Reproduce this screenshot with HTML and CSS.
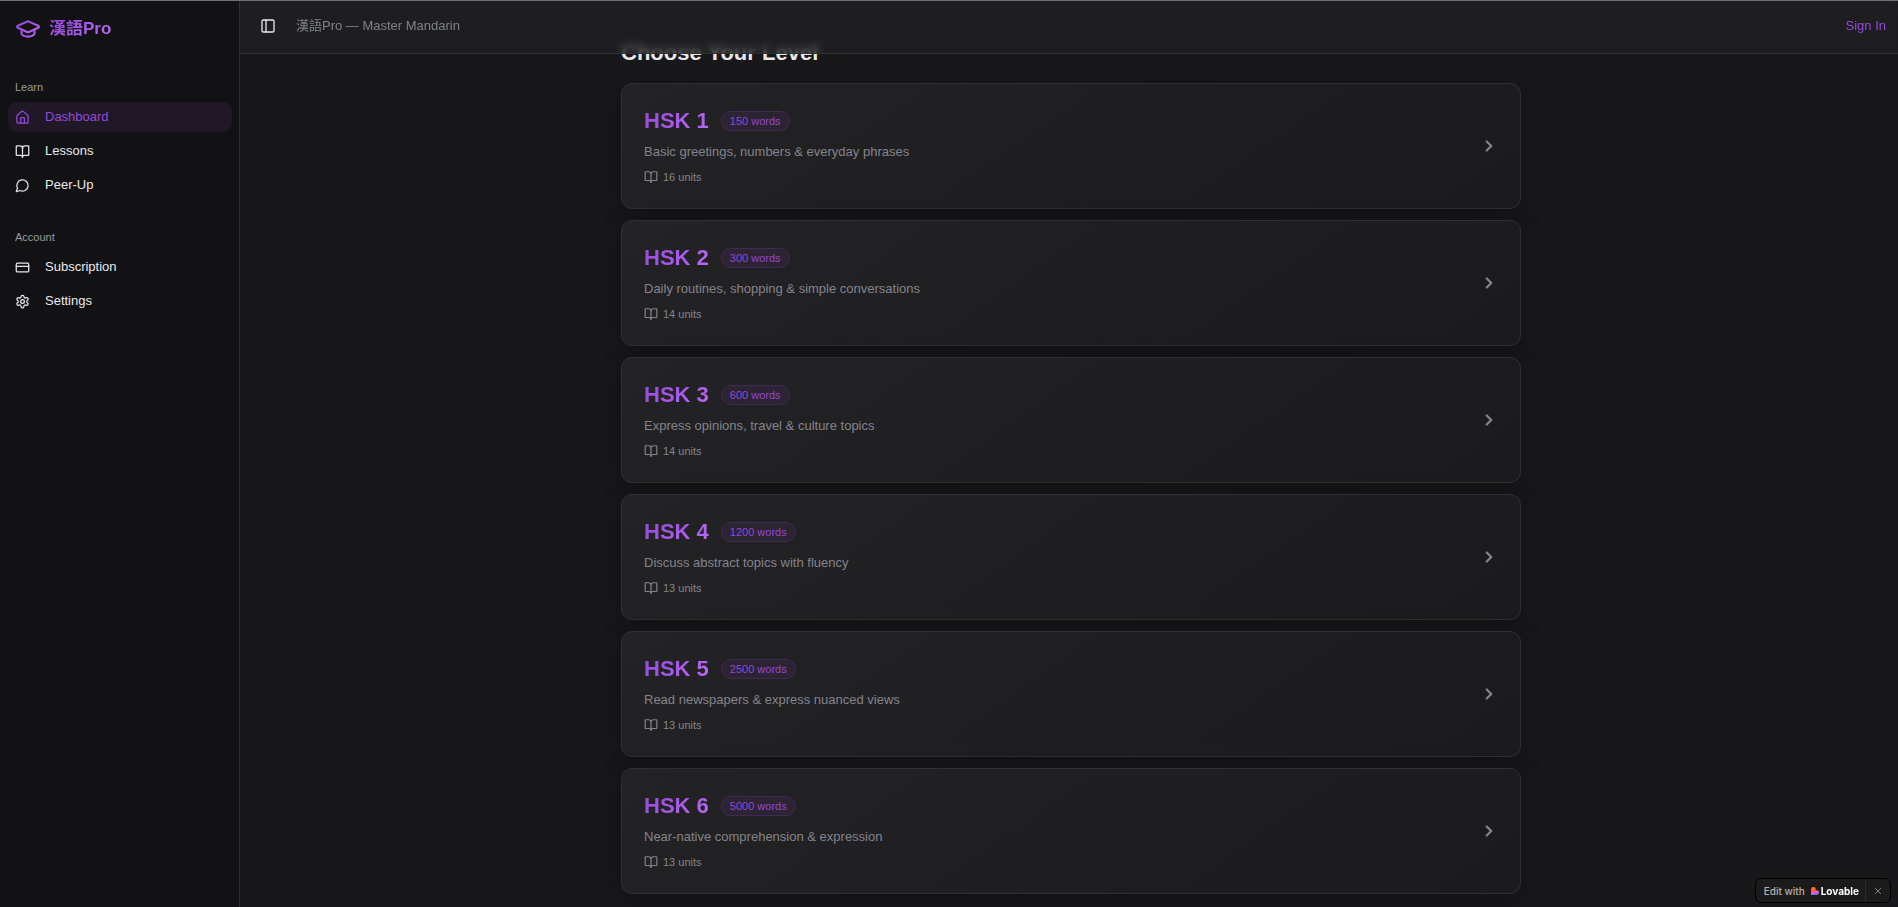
FILE: index.html
```html
<!DOCTYPE html>
<html lang="en">
<head>
  <meta charset="UTF-8">
  <meta name="viewport" content="width=device-width, initial-scale=1.0">
  <title>漢語Pro — Master Mandarin</title>
  <link rel="stylesheet" href="styles.css">
</head>
<body>
  <!-- shared icons -->
  <svg class="sprite" aria-hidden="true">
    <linearGradient id="brand" x1="0" y1="0" x2="1" y2="1">
      <stop offset="0" stop-color="#9448d8"/>
      <stop offset="1" stop-color="#b364f0"/>
    </linearGradient>
    <symbol id="book" viewBox="0 0 24 24">
      <path d="M12 7v14"/>
      <path d="M3 18a1 1 0 0 1-1-1V4a1 1 0 0 1 1-1h5a4 4 0 0 1 4 4 4 4 0 0 1 4-4h5a1 1 0 0 1 1 1v13a1 1 0 0 1-1 1h-6a3 3 0 0 0-3 3 3 3 0 0 0-3-3z"/>
    </symbol>
    <symbol id="chevron" viewBox="0 0 24 24"><path d="m9 18 6-6-6-6"/></symbol>
  </svg>

  <aside class="sidebar">
    <a class="logo" href="#">
      <svg class="icon logo-icon" viewBox="0 0 24 24">
        <path d="M21.42 10.922a1 1 0 0 0-.019-1.838L12.83 5.18a2 2 0 0 0-1.66 0L2.6 9.08a1 1 0 0 0 0 1.832l8.57 3.908a2 2 0 0 0 1.66 0z"/>
        <path d="M22 10v6"/>
        <path d="M6 12.5V16a6 3 0 0 0 12 0v-3.5"/>
      </svg>
      <span class="gradient-text">漢語Pro</span>
    </a>

    <nav class="group">
      <h2>Learn</h2>
      <a class="item active" href="#">
        <svg class="icon" viewBox="0 0 24 24">
          <path d="M15 21v-8a1 1 0 0 0-1-1h-4a1 1 0 0 0-1 1v8"/>
          <path d="M3 10a2 2 0 0 1 .709-1.528l7-5.999a2 2 0 0 1 2.582 0l7 5.999A2 2 0 0 1 21 10v9a2 2 0 0 1-2 2H5a2 2 0 0 1-2-2z"/>
        </svg>
        Dashboard
      </a>
      <a class="item" href="#">
        <svg class="icon"><use href="#book"/></svg>
        Lessons
      </a>
      <a class="item" href="#">
        <svg class="icon" viewBox="0 0 24 24"><path d="M7.9 20A9 9 0 1 0 4 16.1L2 22Z"/></svg>
        Peer-Up
      </a>
    </nav>

    <nav class="group">
      <h2>Account</h2>
      <a class="item" href="#">
        <svg class="icon" viewBox="0 0 24 24">
          <rect width="20" height="14" x="2" y="5" rx="2"/>
          <path d="M2 10h20"/>
        </svg>
        Subscription
      </a>
      <a class="item" href="#">
        <svg class="icon" viewBox="0 0 24 24">
          <path d="M12.22 2h-.44a2 2 0 0 0-2 2v.18a2 2 0 0 1-1 1.73l-.43.25a2 2 0 0 1-2 0l-.15-.08a2 2 0 0 0-2.73.73l-.22.38a2 2 0 0 0 .73 2.73l.15.1a2 2 0 0 1 1 1.72v.51a2 2 0 0 1-1 1.74l-.15.09a2 2 0 0 0-.73 2.73l.22.38a2 2 0 0 0 2.73.73l.15-.08a2 2 0 0 1 2 0l.43.25a2 2 0 0 1 1 1.73V20a2 2 0 0 0 2 2h.44a2 2 0 0 0 2-2v-.18a2 2 0 0 1 1-1.73l.43-.25a2 2 0 0 1 2 0l.15.08a2 2 0 0 0 2.73-.73l.22-.39a2 2 0 0 0-.73-2.73l-.15-.08a2 2 0 0 1-1-1.74v-.5a2 2 0 0 1 1-1.74l.15-.09a2 2 0 0 0 .73-2.73l-.22-.38a2 2 0 0 0-2.73-.73l-.15.08a2 2 0 0 1-2 0l-.43-.25a2 2 0 0 1-1-1.73V4a2 2 0 0 0-2-2z"/>
          <circle cx="12" cy="12" r="3"/>
        </svg>
        Settings
      </a>
    </nav>
  </aside>

  <div class="page">
    <header class="topbar">
      <button class="toggle" type="button" aria-label="Toggle Sidebar">
        <svg class="icon" viewBox="0 0 24 24">
          <rect width="18" height="18" x="3" y="3" rx="2"/>
          <path d="M9 3v18"/>
        </svg>
      </button>
      <span class="tagline">漢語Pro — Master Mandarin</span>
      <a class="sign-in" href="#">Sign In</a>
    </header>

    <main class="content">
      <h1>Choose Your Level</h1>
      <div class="levels">
        <a class="card" href="#">
          <div>
            <div class="card-head"><h3 class="gradient-text">HSK 1</h3><span class="badge">150 words</span></div>
            <p>Basic greetings, numbers &amp; everyday phrases</p>
            <div class="units"><svg class="icon"><use href="#book"/></svg>16 units</div>
          </div>
          <svg class="icon chevron"><use href="#chevron"/></svg>
        </a>
        <a class="card" href="#">
          <div>
            <div class="card-head"><h3 class="gradient-text">HSK 2</h3><span class="badge">300 words</span></div>
            <p>Daily routines, shopping &amp; simple conversations</p>
            <div class="units"><svg class="icon"><use href="#book"/></svg>14 units</div>
          </div>
          <svg class="icon chevron"><use href="#chevron"/></svg>
        </a>
        <a class="card" href="#">
          <div>
            <div class="card-head"><h3 class="gradient-text">HSK 3</h3><span class="badge">600 words</span></div>
            <p>Express opinions, travel &amp; culture topics</p>
            <div class="units"><svg class="icon"><use href="#book"/></svg>14 units</div>
          </div>
          <svg class="icon chevron"><use href="#chevron"/></svg>
        </a>
        <a class="card" href="#">
          <div>
            <div class="card-head"><h3 class="gradient-text">HSK 4</h3><span class="badge">1200 words</span></div>
            <p>Discuss abstract topics with fluency</p>
            <div class="units"><svg class="icon"><use href="#book"/></svg>13 units</div>
          </div>
          <svg class="icon chevron"><use href="#chevron"/></svg>
        </a>
        <a class="card" href="#">
          <div>
            <div class="card-head"><h3 class="gradient-text">HSK 5</h3><span class="badge">2500 words</span></div>
            <p>Read newspapers &amp; express nuanced views</p>
            <div class="units"><svg class="icon"><use href="#book"/></svg>13 units</div>
          </div>
          <svg class="icon chevron"><use href="#chevron"/></svg>
        </a>
        <a class="card" href="#">
          <div>
            <div class="card-head"><h3 class="gradient-text">HSK 6</h3><span class="badge">5000 words</span></div>
            <p>Near-native comprehension &amp; expression</p>
            <div class="units"><svg class="icon"><use href="#book"/></svg>13 units</div>
          </div>
          <svg class="icon chevron"><use href="#chevron"/></svg>
        </a>
      </div>
    </main>
  </div>

  <div class="lovable">
    <a href="#">
      Edit with
      <svg class="heart" viewBox="0 0 16 16">
        <defs>
          <linearGradient id="heart" x1="0.3" y1="0" x2="0.5" y2="1">
            <stop offset="0.1" stop-color="#ff7a1a"/>
            <stop offset="0.45" stop-color="#ff4b4b"/>
            <stop offset="0.7" stop-color="#f25fc0"/>
            <stop offset="1" stop-color="#4b73ff"/>
          </linearGradient>
        </defs>
        <path fill="url(#heart)" d="M4.8 0a4.8 4.8 0 0 1 4.8 4.8v1.8h1.6a4.7 4.7 0 0 1 4.8 4.7 4.7 4.7 0 0 1-4.8 4.7H0V4.8A4.8 4.8 0 0 1 4.8 0z"/>
      </svg>
      <b>Lovable</b>
    </a>
    <button type="button" aria-label="Close">
      <svg class="icon" viewBox="0 0 24 24"><path d="M4 4l16 16M20 4L4 20"/></svg>
    </button>
  </div>
</body>
</html>
```
FILE: styles.css
```css
* {
    box-sizing: border-box;
}

body {
    margin: 0;
    min-height: 100vh;
    display: flex;
    border-top: 1px solid #6e7072;
    background: #18181a;
    color: #e8e8ec;
    font-family: "Liberation Sans", Arial, "Noto Sans CJK TC", sans-serif;
    font-size: 13px;
    line-height: 18px;
}

a {
    color: inherit;
    text-decoration: none;
}

h1, h2, h3, p {
    margin: 0;
}

button {
    border: none;
    padding: 0;
    background: none;
    color: inherit;
    font: inherit;
    cursor: pointer;
}

.sprite {
    position: absolute;
    width: 0;
    height: 0;
}

.icon {
    width: 16px;
    height: 16px;
    flex-shrink: 0;
    fill: none;
    stroke: currentColor;
    stroke-width: 2;
    stroke-linecap: round;
    stroke-linejoin: round;
}

.gradient-text {
    background: linear-gradient(135deg, #9448d8, #b96cf5);
    background-clip: text;
    -webkit-background-clip: text;
    color: transparent;
}

/* sidebar */
.sidebar {
    width: 240px;
    flex-shrink: 0;
    padding: 14px 7px 0 8px;
    background: #121214;
    border-right: 1px solid #303033;
}

.logo {
    display: flex;
    align-items: center;
    gap: 8px;
    height: 28px;
    padding-left: 7px;
    font-size: 17px;
    font-weight: bold;
}

.logo-icon {
    width: 26px;
    height: 26px;
    stroke: url(#brand);
}

.group {
    display: flex;
    flex-direction: column;
    gap: 4px;
    margin-top: 26px;
}

.logo + .group {
    margin-top: 33px;
}

.group h2 {
    padding-left: 7px;
    color: #9a9a9c;
    font-size: 11px;
    font-weight: normal;
    line-height: 22px;
}

.item {
    display: flex;
    align-items: center;
    gap: 15px;
    height: 30px;
    padding-left: 7px;
    border-radius: 9px;
}

.item .icon {
    width: 15px;
    height: 15px;
}

.item.active {
    background: #211827;
    color: #9448d8;
}

/* top bar, sits over the scrolled content */
.page {
    flex: 1;
    min-width: 0;
}

.topbar {
    position: sticky;
    top: 0;
    z-index: 1;
    display: flex;
    align-items: center;
    height: 53px;
    padding: 0 12px 2px 20px;
    background: rgba(33, 33, 35, 0.7);
    backdrop-filter: blur(4px);
    border-bottom: 1px solid #303033;
}

.toggle {
    display: flex;
    margin-right: 20px;
}

.tagline {
    color: #80808a;
}

.sign-in {
    margin-left: auto;
    color: #9448d8;
}

.content {
    max-width: 904px;
    margin: -15px auto 0;
    padding: 0 0 8px 4px;
}

h1 {
    margin-bottom: 16px;
    font-size: 22px;
    line-height: 28px;
}

.levels {
    display: grid;
    gap: 11px;
}

.card {
    display: flex;
    align-items: center;
    justify-content: space-between;
    padding: 22px;
    border: 1px solid #303033;
    border-radius: 11px;
    background: linear-gradient(145deg, #232325, #1b1b1d);
    box-shadow: 0 4px 22px rgba(0, 0, 0, 0.3);
    color: #84848c;
}

.card-head {
    display: flex;
    align-items: center;
    gap: 12px;
    margin-bottom: 7px;
}

.card h3 {
    font-size: 22px;
    line-height: 30px;
}

.badge {
    padding: 1px 8px;
    border: 1px solid #3f2a52;
    border-radius: 10px;
    background: #2c2333;
    color: #9448d8;
    font-size: 11px;
    line-height: 16px;
}

.units {
    display: flex;
    align-items: center;
    gap: 5px;
    margin: 8px 0 1px;
    font-size: 11px;
    line-height: 16px;
}

.units .icon {
    width: 14px;
    height: 14px;
}

.card .chevron {
    width: 18px;
    height: 18px;
    stroke-width: 3;
}

/* corner badge */
.lovable {
    position: fixed;
    right: 7px;
    bottom: 4px;
    z-index: 2;
    display: flex;
    height: 25px;
    border: 1px solid #000;
    border-radius: 6px;
    background: #1b1b1b;
    color: #b5b2aa;
    font-family: Inter, sans-serif;
    font-size: 10px;
    font-weight: 500;
}

.lovable a {
    display: flex;
    align-items: center;
    padding: 0 6px 0 8px;
}

.lovable b {
    color: #fff;
    font-weight: 700;
}

.lovable button {
    display: flex;
    align-items: center;
    padding: 0 8px;
    border-left: 1px solid #2b2b2b;
}

.lovable .icon {
    width: 8px;
    height: 8px;
}

.lovable .heart {
    width: 8px;
    height: 8px;
    margin: 0 2px 0 6px;
}
```
